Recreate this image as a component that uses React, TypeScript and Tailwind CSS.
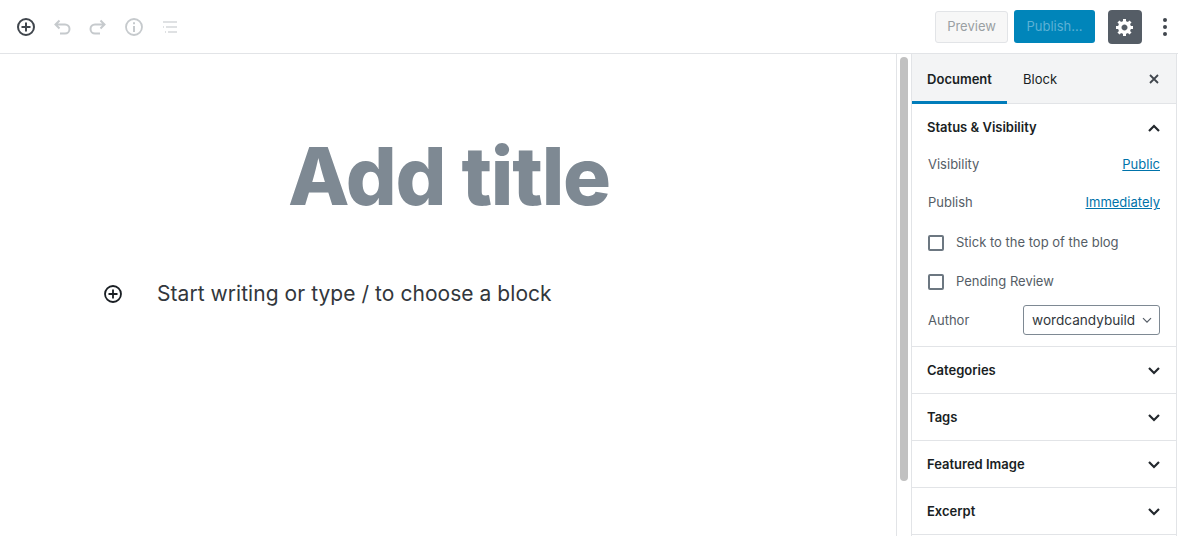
import React from "react";

const Plus = ({ color = "#40464d", size = 20, sw = 2 }: { color?: string; size?: number; sw?: number }) => (
  <svg width={size} height={size} viewBox="0 0 20 20" fill="none" stroke={color}>
    <circle cx="10" cy="10" r="8" strokeWidth={sw} />
    <path d="M10 5.5v9M5.5 10h9" strokeWidth={sw} />
  </svg>
);

const Chevron = ({ up = false }: { up?: boolean }) => (
  <svg width="14" height="10" viewBox="0 0 14 10" fill="none" stroke="#23282d" strokeWidth="2.2">
    <path d={up ? "M2 8l5-5 5 5" : "M2 2l5 5 5-5"} />
  </svg>
);

const Row = ({ title }: { title: string }) => (
  <div className="h-[47px] flex items-center justify-between pl-[15px] pr-[15px] pt-[1px] border-b border-[#e2e4e7] shrink-0">
    <span className="text-[13px] font-semibold text-[#191e23]">{title}</span>
    <Chevron />
  </div>
);

const Check = ({ label }: { label: string }) => (
  <div className="h-[39px] flex items-center gap-[12px] pl-[16px]">
    <span className="w-[16px] h-[16px] border-2 border-[#6c7781] rounded-[2px] bg-white" />
    <span className="text-[13px] text-[#555d66]">{label}</span>
  </div>
);

export default function App() {
  return (
    <div className="w-[1178px] h-[536px] overflow-hidden bg-white flex flex-col font-['Inter',sans-serif]">
      <header className="h-[54px] shrink-0 flex items-center border-b border-[#e2e4e7] pl-[16px] pr-[3px]">
        <div className="flex items-center gap-[16px]">
          <Plus />
          <svg width="20" height="20" viewBox="0 0 20 20" fill="none" stroke="#c6cacd" strokeWidth="2">
            <path d="M7.5 3.5L3.5 7.5l4 4M3.5 7.5H13a3.8 3.8 0 010 9H8" />
          </svg>
          <svg width="20" height="20" viewBox="0 0 20 20" fill="none" stroke="#c6cacd" strokeWidth="2">
            <path d="M12.5 3.5l4 4-4 4M16.5 7.5H7a3.8 3.8 0 000 9h5" />
          </svg>
          <svg width="20" height="20" viewBox="0 0 20 20" fill="none" stroke="#c6cacd" strokeWidth="1.8">
            <circle cx="10" cy="10" r="8" />
            <path d="M10 9v6M10 5.2v2" strokeWidth="2" />
          </svg>
          <svg width="20" height="20" viewBox="0 0 20 20" fill="none" stroke="#d5d8da" strokeWidth="1.6">
            <path d="M3 5h14M6 10h11M3 10h1M8 15h9M5 15h1" />
          </svg>
        </div>
        <div className="ml-auto flex items-center">
          <div className="w-[73px] h-[32px] flex items-center justify-center border border-[#e2e4e7] bg-[#f7f7f7] rounded-[3px] text-[13px] text-[#9a9fa3]">
            Preview
          </div>
          <div className="ml-[6px] w-[81px] h-[33px] flex items-center justify-center bg-[#0085ba] rounded-[3px] text-[13px] text-[#5cb1d5]">
            Publish...
          </div>
          <div className="ml-[13px] w-[34px] h-[34px] flex items-center justify-center bg-[#555d66] rounded-[4px]">
            <svg width="20" height="20" viewBox="0 0 20 20" fill="#fff">
              <path d="M18 12h-2.18c-.17.7-.44 1.35-.81 1.93l1.54 1.54-2.1 2.1-1.54-1.54c-.58.36-1.23.63-1.91.79V19H8v-2.18c-.68-.16-1.33-.43-1.91-.79l-1.54 1.54-2.12-2.12 1.54-1.54c-.36-.58-.63-1.23-.79-1.91H1V9.03h2.17c.16-.7.44-1.35.8-1.94L2.43 5.55l2.1-2.1 1.54 1.54c.58-.37 1.24-.64 1.93-.81V2h3v2.18c.68.16 1.33.43 1.91.79l1.54-1.54 2.12 2.12-1.54 1.54c.36.59.64 1.24.8 1.94H18V12zm-8.5 1.5c1.66 0 3-1.34 3-3s-1.34-3-3-3-3 1.34-3 3 1.34 3 3 3z" />
            </svg>
          </div>
          <div className="ml-[13px] w-[20px] flex flex-col items-center gap-[3px]">
            <span className="w-[4px] h-[4px] rounded-full bg-[#40464d]" />
            <span className="w-[4px] h-[4px] rounded-full bg-[#40464d]" />
            <span className="w-[4px] h-[4px] rounded-full bg-[#40464d]" />
          </div>
        </div>
      </header>

      <div className="flex flex-1 min-h-0">
        <main className="w-[896px] shrink-0 flex flex-col">
          <h1 className="mt-[74px] h-[96px] flex items-center justify-center pl-[2px] text-[80px] leading-none font-[850] tracking-[-0.016em] text-[#7e8993]">
            Add title
          </h1>
          <div className="mt-[54px] flex items-center pl-[103px]">
            <Plus color="#191e23" size={20} sw={1.8} />
            <span className="ml-[34px] text-[21px] leading-[32px] tracking-[0.05px] text-[#32373c]">Start writing or type / to choose a block</span>
          </div>
        </main>

        <div className="w-[15px] shrink-0 border-l border-[#e2e4e7] pl-[3px] pt-[3px]">
          <div className="w-[8px] h-[424px] rounded-b-[4px] rounded-t-[4px] bg-[#c1c1c1]" />
        </div>

        <aside className="w-[266px] shrink-0 border-l border-r border-[#e2e4e7] flex flex-col overflow-hidden">
          <div className="h-[50px] shrink-0 bg-[#f3f4f5] border-b border-[#e2e4e7] flex items-stretch text-[13px]">
            <div className="w-[95px] -mb-px pt-[4px] border-b-[3px] border-[#007cba] flex items-center justify-center font-semibold text-[#191e23]">
              Document
            </div>
            <div className="ml-[16px] pt-[2px] flex items-center text-[#191e23]">Block</div>
            <div className="ml-auto mr-[16px] flex items-center">
              <svg width="12" height="12" viewBox="0 0 12 12" fill="none" stroke="#40464d" strokeWidth="1.8">
                <path d="M2 2l8 8M10 2l-8 8" />
              </svg>
            </div>
          </div>

          <div className="shrink-0 border-b border-[#e2e4e7] pb-[10px]">
            <div className="h-[47px] flex items-center justify-between px-[15px]">
              <span className="text-[13px] font-semibold text-[#191e23]">Status &amp; Visibility</span>
              <Chevron up />
            </div>
            <div className="h-[28px] flex items-center justify-between pl-[16px] pr-[16px] text-[13px] text-[#555d66]">
              <span>Visibility</span>
              <span className="underline text-[#0073aa]">Public</span>
            </div>
            <div className="h-[28px] mt-[10px] flex items-center justify-between pl-[16px] pr-[16px] text-[13px] text-[#555d66]">
              <span>Publish</span>
              <span className="underline text-[#0073aa]">Immediately</span>
            </div>
            <div className="mt-[6px]">
              <Check label="Stick to the top of the blog" />
              <Check label="Pending Review" />
            </div>
            <div className="h-[30px] mt-[5px] flex items-center justify-between pl-[16px] pr-[16px]">
              <span className="text-[13px] text-[#555d66]">Author</span>
              <div className="w-[137px] h-[30px] mb-[2px] flex items-center justify-between pl-[8px] pr-[7px] border border-[#7e8993] rounded-[3px] text-[13.6px] text-[#32373c]">
                <span>wordcandybuild</span>
                <svg width="10" height="7" viewBox="0 0 10 7" fill="none" stroke="#555d66" strokeWidth="1.2">
                  <path d="M1 1.2l4 4 4-4" />
                </svg>
              </div>
            </div>
          </div>

          <Row title="Categories" />
          <Row title="Tags" />
          <Row title="Featured Image" />
          <Row title="Excerpt" />
        </aside>
        <div className="flex-1" />
      </div>
    </div>
  );
}
